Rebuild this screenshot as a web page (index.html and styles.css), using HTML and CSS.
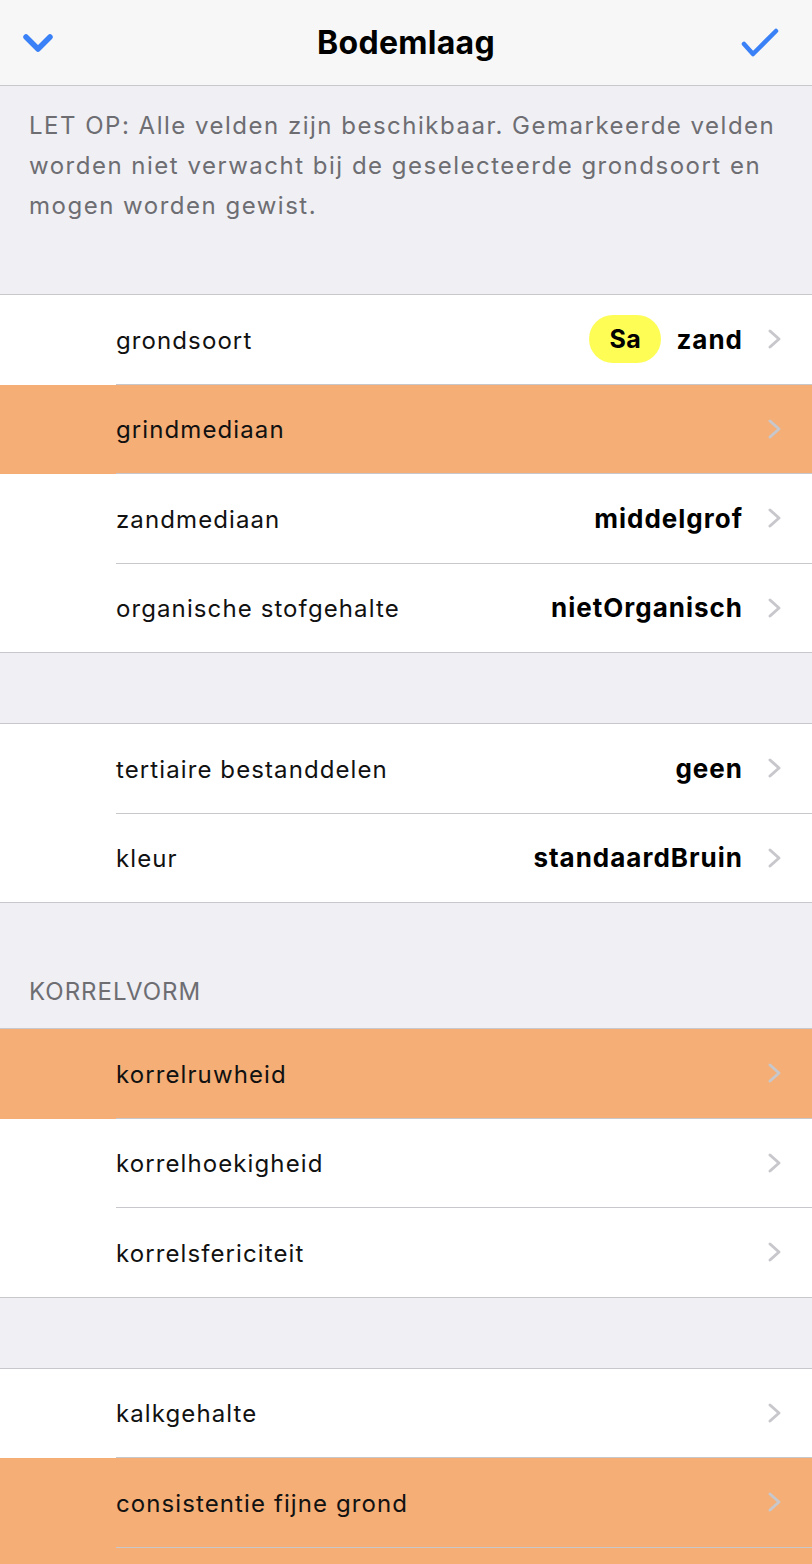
FILE: index.html
```html
<!DOCTYPE html>
<html lang="nl">
<head>
<meta charset="utf-8">
<title>Bodemlaag</title>
<link rel="stylesheet" href="styles.css">
</head>
<body>
<header class="navbar">
  <div class="nav-side left">
    <button class="nav-btn" aria-label="Sluiten">
      <svg width="34" height="24" viewBox="0 0 34 24"><path d="M5 6 L17 18 L29 6" fill="none" stroke="#3a80f6" stroke-width="5.5" stroke-linecap="round" stroke-linejoin="round"/></svg>
    </button>
  </div>
  <h1 class="nav-title">Bodemlaag</h1>
  <div class="nav-side right">
    <button class="nav-btn" aria-label="Opslaan">
      <svg width="40" height="30" viewBox="0 0 40 30"><path d="M3 16 L12 26 L35 3" fill="none" stroke="#3a80f6" stroke-width="4.5" stroke-linecap="round" stroke-linejoin="round"/></svg>
    </button>
  </div>
</header>

<p class="note">LET OP: Alle velden zijn beschikbaar. Gemarkeerde velden worden niet verwacht bij de geselecteerde grondsoort en mogen worden gewist.</p>

<section class="group first">
  <div class="row"><div class="cell"><span class="label">grondsoort</span><span class="value"><span class="badge">Sa</span>zand</span><svg class="chev" width="16" height="22" viewBox="0 0 16 22"><path d="M3 3 L12 11 L3 19" fill="none" stroke="#c7c7cc" stroke-width="3" stroke-linecap="round" stroke-linejoin="round"/></svg></div></div>
  <div class="row warn"><div class="cell"><span class="label">grindmediaan</span><span class="value"></span><svg class="chev" width="16" height="22" viewBox="0 0 16 22"><path d="M3 3 L12 11 L3 19" fill="none" stroke="#c7c7cc" stroke-width="3" stroke-linecap="round" stroke-linejoin="round"/></svg></div></div>
  <div class="row"><div class="cell"><span class="label">zandmediaan</span><span class="value">middelgrof</span><svg class="chev" width="16" height="22" viewBox="0 0 16 22"><path d="M3 3 L12 11 L3 19" fill="none" stroke="#c7c7cc" stroke-width="3" stroke-linecap="round" stroke-linejoin="round"/></svg></div></div>
  <div class="row"><div class="cell"><span class="label">organische stofgehalte</span><span class="value">nietOrganisch</span><svg class="chev" width="16" height="22" viewBox="0 0 16 22"><path d="M3 3 L12 11 L3 19" fill="none" stroke="#c7c7cc" stroke-width="3" stroke-linecap="round" stroke-linejoin="round"/></svg></div></div>
</section>

<section class="group">
  <div class="row"><div class="cell"><span class="label">tertiaire bestanddelen</span><span class="value">geen</span><svg class="chev" width="16" height="22" viewBox="0 0 16 22"><path d="M3 3 L12 11 L3 19" fill="none" stroke="#c7c7cc" stroke-width="3" stroke-linecap="round" stroke-linejoin="round"/></svg></div></div>
  <div class="row"><div class="cell"><span class="label">kleur</span><span class="value">standaardBruin</span><svg class="chev" width="16" height="22" viewBox="0 0 16 22"><path d="M3 3 L12 11 L3 19" fill="none" stroke="#c7c7cc" stroke-width="3" stroke-linecap="round" stroke-linejoin="round"/></svg></div></div>
</section>

<h2 class="section-title">KORRELVORM</h2>
<section class="group titled">
  <div class="row warn"><div class="cell"><span class="label">korrelruwheid</span><span class="value"></span><svg class="chev" width="16" height="22" viewBox="0 0 16 22"><path d="M3 3 L12 11 L3 19" fill="none" stroke="#c7c7cc" stroke-width="3" stroke-linecap="round" stroke-linejoin="round"/></svg></div></div>
  <div class="row"><div class="cell"><span class="label">korrelhoekigheid</span><span class="value"></span><svg class="chev" width="16" height="22" viewBox="0 0 16 22"><path d="M3 3 L12 11 L3 19" fill="none" stroke="#c7c7cc" stroke-width="3" stroke-linecap="round" stroke-linejoin="round"/></svg></div></div>
  <div class="row"><div class="cell"><span class="label">korrelsfericiteit</span><span class="value"></span><svg class="chev" width="16" height="22" viewBox="0 0 16 22"><path d="M3 3 L12 11 L3 19" fill="none" stroke="#c7c7cc" stroke-width="3" stroke-linecap="round" stroke-linejoin="round"/></svg></div></div>
</section>

<section class="group">
  <div class="row"><div class="cell"><span class="label">kalkgehalte</span><span class="value"></span><svg class="chev" width="16" height="22" viewBox="0 0 16 22"><path d="M3 3 L12 11 L3 19" fill="none" stroke="#c7c7cc" stroke-width="3" stroke-linecap="round" stroke-linejoin="round"/></svg></div></div>
  <div class="row warn"><div class="cell"><span class="label">consistentie fijne grond</span><span class="value"></span><svg class="chev" width="16" height="22" viewBox="0 0 16 22"><path d="M3 3 L12 11 L3 19" fill="none" stroke="#c7c7cc" stroke-width="3" stroke-linecap="round" stroke-linejoin="round"/></svg></div></div>
  <div class="row warn"><div class="cell"></div></div>
</section>
</body>
</html>
```

FILE: styles.css
```css
* { box-sizing: border-box; }

html, body {
  margin: 0;
  padding: 0;
}

body {
  background: #efeff4;
  font-family: Inter, "Noto Sans", "Liberation Sans", sans-serif;
  color: #000;
  width: 812px;
  overflow: hidden;
}

.navbar {
  height: 86px;
  background: #f7f7f7;
  border-bottom: 1px solid #c8c7cc;
  display: flex;
  align-items: center;
  padding: 0 31px 0 21px;
}

.nav-side {
  flex: 1;
  display: flex;
}

.nav-side.right {
  justify-content: flex-end;
}

.nav-btn {
  background: none;
  border: 0;
  padding: 0;
  display: flex;
  align-items: center;
}

.nav-title {
  margin: 0 0 0 10px;
  font-size: 32px;
  font-weight: 700;
  letter-spacing: 0.3px;
}

.note {
  margin: 0;
  padding: 20px 20px 0 29px;
  font-size: 24px;
  line-height: 40px;
  letter-spacing: 1.5px;
  color: #6d6d72;
}

.group {
  background: #fff;
  border-top: 1px solid #c8c7cc;
  border-bottom: 1px solid #c8c7cc;
  margin-top: 70px;
}

.group.first {
  margin-top: 68px;
}

.group.titled {
  margin-top: 0;
}

.section-title {
  margin: 0;
  padding: 69px 29px 16px;
  font-size: 24px;
  line-height: 40px;
  font-weight: 400;
  letter-spacing: 1px;
  color: #6d6d72;
}

.row {
  background: #fff;
  padding-left: 116px;
}

.row.warn {
  background: #f4ae76;
}

.cell {
  height: 89.5px;
  display: flex;
  align-items: center;
  padding-right: 29px;
  border-bottom: 1px solid #c8c7cc;
}

.row:last-child .cell {
  height: 88.5px;
  border-bottom: 0;
}

.label {
  flex: 1;
  font-size: 24px;
  letter-spacing: 1.1px;
  color: #111;
  padding-top: 2px;
}

.value {
  display: flex;
  align-items: center;
  font-size: 26px;
  font-weight: 700;
  letter-spacing: 1px;
  margin-right: 24px;
}

.badge {
  display: inline-flex;
  align-items: center;
  justify-content: center;
  width: 72px;
  height: 48px;
  border-radius: 24px;
  background: #fdfd55;
  font-size: 25px;
  font-weight: 700;
  letter-spacing: 0.5px;
  margin-right: 15px;
}

.chev {
  display: block;
}
```
